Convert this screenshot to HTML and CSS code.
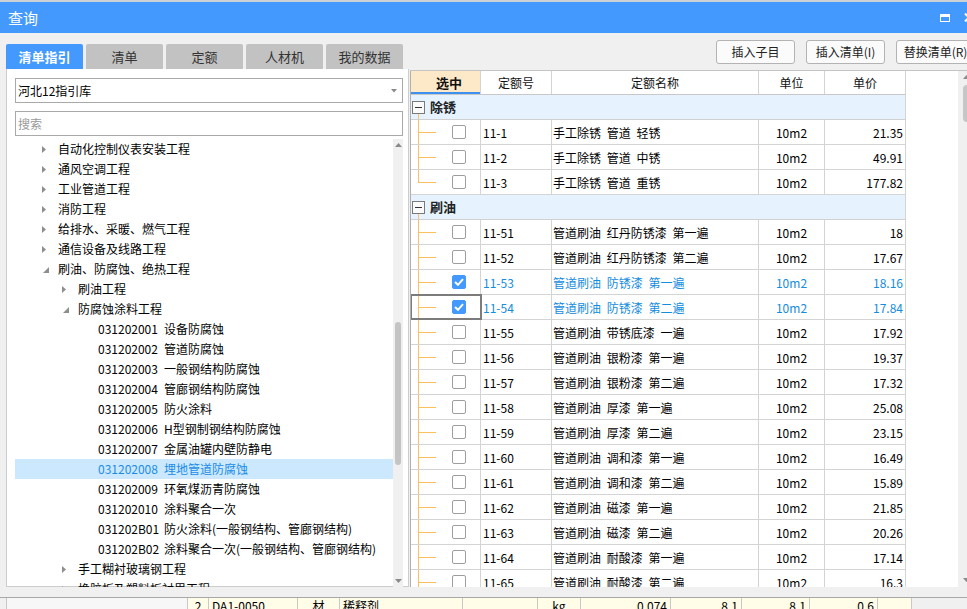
FILE: index.html
```html
<!DOCTYPE html>
<html lang="zh-CN">
<head>
<meta charset="utf-8">
<title>查询</title>
<link rel="stylesheet" href="styles.css">
</head>
<body>
<div class="window">
  <div class="topline"></div>
  <div class="titlebar">
    <span class="title">查询</span>
    <span class="winbtns">
      <span class="restore"></span>
      <svg class="closex" width="10" height="9" viewBox="0 0 10 9"><path d="M1 0.5L9 8.5M9 0.5L1 8.5" stroke="#fff" stroke-width="2"/></svg>
    </span>
  </div>

  <div class="content">
    <div class="left">
      <div class="tabs">
        <div class="tab active">清单指引</div>
        <div class="tab">清单</div>
        <div class="tab">定额</div>
        <div class="tab">人材机</div>
        <div class="tab">我的数据</div>
      </div>
      <div class="panel">
        <div class="select">
          <span>河北12指引库</span>
          <svg width="6" height="4" viewBox="0 0 6 4"><path d="M0 0H6L3 3.5Z" fill="#8a8a8a"/></svg>
        </div>
        <div class="search">搜索</div>
        <div class="treewrap">
          <div class="tree">
            <div class="tr l1"><span class="tw"><svg width="4" height="7" viewBox="0 0 4 7"><path d="M0 0L4 3.5L0 7Z" fill="#8e8e8e"/></svg></span><span>自动化控制仪表安装工程</span></div>
            <div class="tr l1"><span class="tw"><svg width="4" height="7" viewBox="0 0 4 7"><path d="M0 0L4 3.5L0 7Z" fill="#8e8e8e"/></svg></span><span>通风空调工程</span></div>
            <div class="tr l1"><span class="tw"><svg width="4" height="7" viewBox="0 0 4 7"><path d="M0 0L4 3.5L0 7Z" fill="#8e8e8e"/></svg></span><span>工业管道工程</span></div>
            <div class="tr l1"><span class="tw"><svg width="4" height="7" viewBox="0 0 4 7"><path d="M0 0L4 3.5L0 7Z" fill="#8e8e8e"/></svg></span><span>消防工程</span></div>
            <div class="tr l1"><span class="tw"><svg width="4" height="7" viewBox="0 0 4 7"><path d="M0 0L4 3.5L0 7Z" fill="#8e8e8e"/></svg></span><span>给排水、采暖、燃气工程</span></div>
            <div class="tr l1"><span class="tw"><svg width="4" height="7" viewBox="0 0 4 7"><path d="M0 0L4 3.5L0 7Z" fill="#8e8e8e"/></svg></span><span>通信设备及线路工程</span></div>
            <div class="tr l1"><span class="tw"><svg class="exp" width="6" height="6" viewBox="0 0 6 6"><path d="M6 0V6H0Z" fill="#8e8e8e"/></svg></span><span>刷油、防腐蚀、绝热工程</span></div>
            <div class="tr l2"><span class="tw"><svg width="4" height="7" viewBox="0 0 4 7"><path d="M0 0L4 3.5L0 7Z" fill="#8e8e8e"/></svg></span><span>刷油工程</span></div>
            <div class="tr l2"><span class="tw"><svg class="exp" width="6" height="6" viewBox="0 0 6 6"><path d="M6 0V6H0Z" fill="#8e8e8e"/></svg></span><span>防腐蚀涂料工程</span></div>
            <div class="tr l3"><span class="code">031202001</span><span>设备防腐蚀</span></div>
            <div class="tr l3"><span class="code">031202002</span><span>管道防腐蚀</span></div>
            <div class="tr l3"><span class="code">031202003</span><span>一般钢结构防腐蚀</span></div>
            <div class="tr l3"><span class="code">031202004</span><span>管廊钢结构防腐蚀</span></div>
            <div class="tr l3"><span class="code">031202005</span><span>防火涂料</span></div>
            <div class="tr l3"><span class="code">031202006</span><span>H型钢制钢结构防腐蚀</span></div>
            <div class="tr l3"><span class="code">031202007</span><span>金属油罐内壁防静电</span></div>
            <div class="tr l3 sel"><span class="code">031202008</span><span>埋地管道防腐蚀</span></div>
            <div class="tr l3"><span class="code">031202009</span><span>环氧煤沥青防腐蚀</span></div>
            <div class="tr l3"><span class="code">031202010</span><span>涂料聚合一次</span></div>
            <div class="tr l3"><span class="code">031202B01</span><span>防火涂料(一般钢结构、管廊钢结构)</span></div>
            <div class="tr l3"><span class="code">031202B02</span><span>涂料聚合一次(一般钢结构、管廊钢结构)</span></div>
            <div class="tr l2"><span class="tw"><svg width="4" height="7" viewBox="0 0 4 7"><path d="M0 0L4 3.5L0 7Z" fill="#8e8e8e"/></svg></span><span>手工糊衬玻璃钢工程</span></div>
            <div class="tr l2"><span class="tw"><svg width="4" height="7" viewBox="0 0 4 7"><path d="M0 0L4 3.5L0 7Z" fill="#8e8e8e"/></svg></span><span>橡胶板及塑料板衬里工程</span></div>
          </div>
          <div class="vscroll">
            <svg class="arr-up" width="7" height="4" viewBox="0 0 7 4"><path d="M0 4L3.5 0L7 4Z" fill="#8a8a8a"/></svg>
            <div class="thumb"></div>
            <svg class="arr-down" width="7" height="4" viewBox="0 0 7 4"><path d="M0 0L3.5 4L7 0Z" fill="#8a8a8a"/></svg>
          </div>
        </div>
      </div>
    </div>

    <div class="right">
      <div class="toolbar">
        <div class="btn">插入子目</div>
        <div class="btn">插入清单(I)</div>
        <div class="btn">替换清单(R)</div>
      </div>
      <div class="gridwrap">
        <div class="grid">
          <div class="grow head">
            <div class="c c1 pick">选中</div>
            <div class="c c2 ctr">定额号</div>
            <div class="c c3 ctr">定额名称</div>
            <div class="c c4 ctr">单位</div>
            <div class="c c5 ctr">单价</div>
          </div>

          <div class="group"><svg class="minus" width="14" height="24" viewBox="0 0 14 24" shape-rendering="crispEdges"><rect x="1.5" y="6.5" width="12" height="12" fill="#fafafa" stroke="#7a7a7a"/><path d="M4 12.5H11" stroke="#333"/><path d="M7.5 19V24" stroke="#ffbf5e"/></svg><span class="gname">除锈</span></div>
          <div class="grow"><div class="c c1"><svg class="br" width="18" height="24" viewBox="0 0 18 24" shape-rendering="crispEdges"><path d="M0.5 0V24M0 12.5H18" stroke="#ffbf5e"/></svg><span class="cb"></span></div><div class="c c2">11-1</div><div class="c c3">手工除锈 管道 轻锈</div><div class="c c4">10m2</div><div class="c c5">21.35</div></div>
          <div class="grow"><div class="c c1"><svg class="br" width="18" height="24" viewBox="0 0 18 24" shape-rendering="crispEdges"><path d="M0.5 0V24M0 12.5H18" stroke="#ffbf5e"/></svg><span class="cb"></span></div><div class="c c2">11-2</div><div class="c c3">手工除锈 管道 中锈</div><div class="c c4">10m2</div><div class="c c5">49.91</div></div>
          <div class="grow"><div class="c c1"><svg class="br" width="18" height="24" viewBox="0 0 18 24" shape-rendering="crispEdges"><path d="M0.5 0V13M0 12.5H18" stroke="#ffbf5e"/></svg><span class="cb"></span></div><div class="c c2">11-3</div><div class="c c3">手工除锈 管道 重锈</div><div class="c c4">10m2</div><div class="c c5">177.82</div></div>

          <div class="group"><svg class="minus" width="14" height="24" viewBox="0 0 14 24" shape-rendering="crispEdges"><rect x="1.5" y="6.5" width="12" height="12" fill="#fafafa" stroke="#7a7a7a"/><path d="M4 12.5H11" stroke="#333"/><path d="M7.5 19V24" stroke="#ffbf5e"/></svg><span class="gname">刷油</span></div>
          <div class="grow"><div class="c c1"><svg class="br" width="18" height="24" viewBox="0 0 18 24" shape-rendering="crispEdges"><path d="M0.5 0V24M0 12.5H18" stroke="#ffbf5e"/></svg><span class="cb"></span></div><div class="c c2">11-51</div><div class="c c3">管道刷油 红丹防锈漆 第一遍</div><div class="c c4">10m2</div><div class="c c5">18</div></div>
          <div class="grow"><div class="c c1"><svg class="br" width="18" height="24" viewBox="0 0 18 24" shape-rendering="crispEdges"><path d="M0.5 0V24M0 12.5H18" stroke="#ffbf5e"/></svg><span class="cb"></span></div><div class="c c2">11-52</div><div class="c c3">管道刷油 红丹防锈漆 第二遍</div><div class="c c4">10m2</div><div class="c c5">17.67</div></div>
          <div class="grow on"><div class="c c1"><svg class="br" width="18" height="24" viewBox="0 0 18 24" shape-rendering="crispEdges"><path d="M0.5 0V24M0 12.5H18" stroke="#ffbf5e"/></svg><span class="cb checked"><svg width="10" height="8" viewBox="0 0 10 8"><path d="M1 4L4 6.8L9 1.2" stroke="#fff" stroke-width="2" fill="none"/></svg></span></div><div class="c c2">11-53</div><div class="c c3">管道刷油 防锈漆 第一遍</div><div class="c c4">10m2</div><div class="c c5">18.16</div></div>
          <div class="grow on"><div class="c c1 focus"><svg class="br" width="18" height="24" viewBox="0 0 18 24" shape-rendering="crispEdges"><path d="M0.5 0V24M0 12.5H18" stroke="#ffbf5e"/></svg><span class="cb checked"><svg width="10" height="8" viewBox="0 0 10 8"><path d="M1 4L4 6.8L9 1.2" stroke="#fff" stroke-width="2" fill="none"/></svg></span></div><div class="c c2">11-54</div><div class="c c3">管道刷油 防锈漆 第二遍</div><div class="c c4">10m2</div><div class="c c5">17.84</div></div>
          <div class="grow"><div class="c c1"><svg class="br" width="18" height="24" viewBox="0 0 18 24" shape-rendering="crispEdges"><path d="M0.5 0V24M0 12.5H18" stroke="#ffbf5e"/></svg><span class="cb"></span></div><div class="c c2">11-55</div><div class="c c3">管道刷油 带锈底漆 一遍</div><div class="c c4">10m2</div><div class="c c5">17.92</div></div>
          <div class="grow"><div class="c c1"><svg class="br" width="18" height="24" viewBox="0 0 18 24" shape-rendering="crispEdges"><path d="M0.5 0V24M0 12.5H18" stroke="#ffbf5e"/></svg><span class="cb"></span></div><div class="c c2">11-56</div><div class="c c3">管道刷油 银粉漆 第一遍</div><div class="c c4">10m2</div><div class="c c5">19.37</div></div>
          <div class="grow"><div class="c c1"><svg class="br" width="18" height="24" viewBox="0 0 18 24" shape-rendering="crispEdges"><path d="M0.5 0V24M0 12.5H18" stroke="#ffbf5e"/></svg><span class="cb"></span></div><div class="c c2">11-57</div><div class="c c3">管道刷油 银粉漆 第二遍</div><div class="c c4">10m2</div><div class="c c5">17.32</div></div>
          <div class="grow"><div class="c c1"><svg class="br" width="18" height="24" viewBox="0 0 18 24" shape-rendering="crispEdges"><path d="M0.5 0V24M0 12.5H18" stroke="#ffbf5e"/></svg><span class="cb"></span></div><div class="c c2">11-58</div><div class="c c3">管道刷油 厚漆 第一遍</div><div class="c c4">10m2</div><div class="c c5">25.08</div></div>
          <div class="grow"><div class="c c1"><svg class="br" width="18" height="24" viewBox="0 0 18 24" shape-rendering="crispEdges"><path d="M0.5 0V24M0 12.5H18" stroke="#ffbf5e"/></svg><span class="cb"></span></div><div class="c c2">11-59</div><div class="c c3">管道刷油 厚漆 第二遍</div><div class="c c4">10m2</div><div class="c c5">23.15</div></div>
          <div class="grow"><div class="c c1"><svg class="br" width="18" height="24" viewBox="0 0 18 24" shape-rendering="crispEdges"><path d="M0.5 0V24M0 12.5H18" stroke="#ffbf5e"/></svg><span class="cb"></span></div><div class="c c2">11-60</div><div class="c c3">管道刷油 调和漆 第一遍</div><div class="c c4">10m2</div><div class="c c5">16.49</div></div>
          <div class="grow"><div class="c c1"><svg class="br" width="18" height="24" viewBox="0 0 18 24" shape-rendering="crispEdges"><path d="M0.5 0V24M0 12.5H18" stroke="#ffbf5e"/></svg><span class="cb"></span></div><div class="c c2">11-61</div><div class="c c3">管道刷油 调和漆 第二遍</div><div class="c c4">10m2</div><div class="c c5">15.89</div></div>
          <div class="grow"><div class="c c1"><svg class="br" width="18" height="24" viewBox="0 0 18 24" shape-rendering="crispEdges"><path d="M0.5 0V24M0 12.5H18" stroke="#ffbf5e"/></svg><span class="cb"></span></div><div class="c c2">11-62</div><div class="c c3">管道刷油 磁漆 第一遍</div><div class="c c4">10m2</div><div class="c c5">21.85</div></div>
          <div class="grow"><div class="c c1"><svg class="br" width="18" height="24" viewBox="0 0 18 24" shape-rendering="crispEdges"><path d="M0.5 0V24M0 12.5H18" stroke="#ffbf5e"/></svg><span class="cb"></span></div><div class="c c2">11-63</div><div class="c c3">管道刷油 磁漆 第二遍</div><div class="c c4">10m2</div><div class="c c5">20.26</div></div>
          <div class="grow"><div class="c c1"><svg class="br" width="18" height="24" viewBox="0 0 18 24" shape-rendering="crispEdges"><path d="M0.5 0V24M0 12.5H18" stroke="#ffbf5e"/></svg><span class="cb"></span></div><div class="c c2">11-64</div><div class="c c3">管道刷油 耐酸漆 第一遍</div><div class="c c4">10m2</div><div class="c c5">17.14</div></div>
          <div class="grow"><div class="c c1"><svg class="br" width="18" height="24" viewBox="0 0 18 24" shape-rendering="crispEdges"><path d="M0.5 0V24M0 12.5H18" stroke="#ffbf5e"/></svg><span class="cb"></span></div><div class="c c2">11-65</div><div class="c c3">管道刷油 耐酸漆 第二遍</div><div class="c c4">10m2</div><div class="c c5">16.3</div></div>
        </div>
        <div class="blank"></div>
        <div class="vscroll2">
          <svg class="arr-up" width="7" height="4" viewBox="0 0 7 4"><path d="M0 4L3.5 0L7 4Z" fill="#8a8a8a"/></svg>
          <div class="thumb2"></div>
          <svg class="arr-down2" width="7" height="4" viewBox="0 0 7 4"><path d="M0 0L3.5 4L7 0Z" fill="#8a8a8a"/></svg>
        </div>
      </div>
    </div>
  </div>

  <div class="gap"></div>
  <div class="strip">
    <span class="s s0"></span>
    <span class="s s1"></span>
    <span class="s s2 cr ctr">2</span>
    <span class="s s3 cr">DA1-0050</span>
    <span class="s s4 cr ctr">材</span>
    <span class="s s5 cr">稀释剂</span>
    <span class="s s6 cr"></span>
    <span class="s s7 cr ctr">kg</span>
    <span class="s s8 cr rt">0.074</span>
    <span class="s s9 cr rt">8.1</span>
    <span class="s s10 cr rt">8.1</span>
    <span class="s s11 cr rt">0.6</span>
    <span class="s s12 cr"></span>
    <span class="s s13"></span>
  </div>
</div>
</body>
</html>
```

FILE: styles.css
```css
* { box-sizing: border-box; margin: 0; padding: 0; }
html, body { width: 967px; height: 609px; overflow: hidden; }
body {
  background: #f0f0f0;
  font-family: "Noto Sans CJK SC", "Noto Sans", sans-serif;
  font-size: 12px;
  color: #000;
}
.window { width: 967px; height: 609px; display: flex; flex-direction: column; overflow: hidden; }

.topline { height: 2px; background: #cdd1d6; flex: none; }
.titlebar {
  height: 31px; flex: none; background: #4499ff; color: #fff;
  display: flex; align-items: center; justify-content: space-between;
  padding-left: 8px;
}
.title { font-size: 15px; line-height: 31px; }
.winbtns { display: flex; align-items: center; gap: 14px; margin-right: -7px; }
.restore { width: 10px; height: 8px; border: 1px solid #fff; border-top-width: 3px; }
.closex { display: block; }

.content { height: 554px; flex: none; display: flex; }

/* left side */
.left { width: 410px; flex: none; padding-left: 6px; display: flex; flex-direction: column; }
.tabs { display: flex; gap: 3px; margin-top: 11px; height: 25px; flex: none; }
.tab {
  width: 77px; height: 25px; background: #c2c2c2; color: #333;
  border-radius: 2px 2px 0 0; text-align: center; line-height: 25px; font-size: 13px;
}
.tab.active { background: #4499ff; color: #fff; font-weight: bold; }
.panel {
  width: 403px; height: 518px; flex: none; background: #fff;
  border: 1px solid #cdcdcd; border-top: none;
  padding: 9px 5px 0 8px; display: flex; flex-direction: column;
}
.select {
  height: 25px; flex: none; border: 1px solid #a9a9a9;
  display: flex; align-items: center; justify-content: space-between;
  padding: 0 5px 0 2px; line-height: 23px;
}
.select svg { display: block; }
.search {
  height: 25px; flex: none; margin-top: 8px; border: 1px solid #a9a9a9;
  padding-left: 2px; color: #9a9a9a; line-height: 23px;
}
.treewrap { margin-top: 3px; height: 448px; flex: none; display: flex; overflow: hidden; }
.tree { flex: 1; overflow: hidden; }
.tr { height: 20px; line-height: 20px; display: flex; align-items: center; white-space: nowrap; }
.tw { width: 16px; flex: none; display: flex; align-items: center; }
.tw svg { display: block; }
.tw svg.exp { margin-top: 2px; margin-left: 1px; }
.l1 { padding-left: 27px; }
.l2 { padding-left: 47px; }
.l3 { padding-left: 83px; }
.code { width: 66px; flex: none; }
.tr.sel { background: #cce8ff; color: #1a8ce6; }

.vscroll { width: 10px; flex: none; background: #f0f0f0; display: flex; flex-direction: column; align-items: center; }
.vscroll .arr-up { margin-top: 4px; flex: none; }
.thumb { width: 6px; height: 143px; margin-top: 175px; border-radius: 3px; background: #c4c4c4; flex: none; }
.arr-down { margin-top: auto; margin-bottom: 4px; flex: none; }

/* right side */
.right { flex: 1; min-width: 0; display: flex; flex-direction: column; overflow: hidden; }
.toolbar { height: 37px; flex: none; display: flex; gap: 11px; padding: 7px 0 0 306px; }
.btn {
  width: 79px; height: 24px; flex: none;
  border: 1px solid #b3b3b3; border-radius: 3px; background: #fbfbfb;
  text-align: center; line-height: 22px; color: #222; white-space: nowrap;
}
.gridwrap { height: 517px; flex: none; display: flex; background: #fff; border-top: 1px solid #c4c4c4; }
.grid { width: 496px; flex: none; border-left: 1px solid #b0b0b0; overflow: hidden; }
.blank { width: 52px; flex: none; }
.vscroll2 { width: 17px; flex: none; background: #f0f0f0; display: flex; flex-direction: column; align-items: center; }
.vscroll2 .arr-up { margin-top: 4px; flex: none; }
.thumb2 { width: 8px; height: 37px; margin-top: 6px; border-radius: 4px; background: #c6c6c6; flex: none; }
.arr-down2 { margin-top: auto; margin-bottom: 5px; flex: none; }

.grow { display: flex; height: 25px; border-bottom: 1px solid #d4d4d4; }
.grow.head { height: 24px; border-bottom-color: #c8c8c8; }
.c { height: 100%; flex: none; display: flex; align-items: center; border-right: 1px solid #d4d4d4; white-space: nowrap; overflow: hidden; }
.c1 { width: 70px; padding-left: 7px; }
.c2 { width: 71px; padding-left: 2px; }
.c3 { width: 207px; padding-left: 1px; word-spacing: 3px; }
.c4 { width: 66px; justify-content: center; }
.c5 { width: 81px; justify-content: flex-end; padding-right: 2px; }
.ctr { justify-content: center; padding: 0; }
.head .c { color: #111; }
.pick { justify-content: center; background: #fde8c8; font-weight: bold; font-size: 13px; box-shadow: inset 0 -2px 0 #3d8ff0; }

.group {
  display: flex; align-items: center; height: 25px; width: 495px;
  border-bottom: 1px solid #d0d0d0; border-right: 1px solid #d4d4d4;
  background: #e6f3ff;
}
.minus { display: block; flex: none; }
.gname { font-weight: bold; font-size: 13px; margin-left: 5px; color: #222; line-height: 24px; }

.br { display: block; flex: none; }
.cb {
  width: 14px; height: 14px; margin-left: 16px; flex: none;
  border: 1px solid #9e9e9e; border-radius: 2px; background: #fff;
  display: flex; align-items: center; justify-content: center;
}
.cb.checked { background: #4499ff; border-color: #4499ff; }
.cb svg { display: block; }
.grow.on .c { color: #148ce0; }
.focus { outline: 2px solid #7c7c7c; outline-offset: -1px; position: relative; z-index: 1; }

/* bottom strip (background window) */
.gap { height: 11px; flex: none; border-bottom: 1px solid #a8a8a8; }
.strip { height: 22px; flex: none; display: flex; line-height: 16px; font-size: 12px; }
.s { height: 22px; flex: none; border-right: 1px solid #c8c8c8; white-space: nowrap; overflow: hidden; display: flex; }
.s0 { width: 7px; background: #f0f0f0; }
.s1 { width: 181px; background: #f7f7f7; }
.cr { background: #fffce8; }
.s2 { width: 21px; }
.s3 { width: 89px; padding-left: 3px; }
.s4 { width: 42px; }
.s5 { width: 123px; padding-left: 3px; }
.s6 { width: 75px; }
.s7 { width: 43px; }
.s8 { width: 90px; }
.s9 { width: 71px; }
.s10 { width: 68px; }
.s11 { width: 68px; }
.s12 { width: 34px; }
.s13 { width: 60px; background: #f0f0f0; border-right: none; }
.s.ctr { justify-content: center; }
.s.rt { justify-content: flex-end; padding-right: 3px; }
```
